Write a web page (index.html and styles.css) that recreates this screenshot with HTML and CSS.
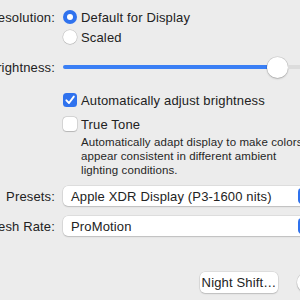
FILE: index.html
```html
<!DOCTYPE html>
<html>
<head>
<meta charset="utf-8">
<link rel="stylesheet" href="styles.css">
</head>
<body>
<div class="pane">
  <div class="row row-res">
    <div class="label"><span>Resolution:</span></div>
    <div class="radios">
      <div class="opt"><span class="radio on"></span><span>Default for Display</span></div>
      <div class="opt"><span class="radio"></span><span>Scaled</span></div>
    </div>
  </div>
  <div class="row row-bright">
    <div class="label"><span>Brightness:</span></div>
    <div class="slider">
      <div class="fill"></div>
      <div class="thumb"></div>
      <div class="rest"></div>
    </div>
  </div>
  <div class="row row-auto">
    <div class="label"></div>
    <div class="opt"><span class="check on"><svg width="14" height="14" viewBox="0 0 14 14"><path d="M3.4 7.3 L6 10 L10.8 3.6" fill="none" stroke="#fff" stroke-width="1.9" stroke-linecap="round" stroke-linejoin="round"/></svg></span><span>Automatically adjust brightness</span></div>
  </div>
  <div class="row row-tt">
    <div class="label"></div>
    <div class="opt"><span class="check"></span><span>True Tone</span></div>
  </div>
  <div class="row row-desc">
    <div class="label"></div>
    <p class="desc">Automatically adapt display to make colors<br>appear consistent in different ambient<br>lighting conditions.</p>
  </div>
  <div class="row row-presets">
    <div class="label"><span>Presets:</span></div>
    <div class="popup"><span class="ptext">Apple XDR Display (P3-1600 nits)</span><span class="arrow"></span></div>
  </div>
  <div class="row row-rate">
    <div class="label"><span>Refresh Rate:</span></div>
    <div class="popup"><span class="ptext">ProMotion</span><span class="arrow"></span></div>
  </div>
  <div class="buttons">
    <div class="btn">Night Shift…</div>
    <div class="help">?</div>
  </div>
</div>
</body>
</html>
```

FILE: styles.css
```css
html, body {
  margin: 0;
  padding: 0;
}
body {
  width: 300px;
  height: 300px;
  overflow: hidden;
  background: #ececec;
  font-family: "Liberation Sans", Arial, sans-serif;
  font-size: 13px;
  letter-spacing: 0.15px;
  color: #222;
}
.pane {
  padding-top: 7px;
  width: 300px;
}
.row {
  display: flex;
  align-items: center;
  gap: 8px;
}
.label {
  width: 55px;
  flex: 0 0 55px;
  display: flex;
  justify-content: flex-end;
  white-space: nowrap;
  align-self: flex-start;
  height: 20px;
  align-items: center;
}
.radios {
  display: flex;
  flex-direction: column;
}
.opt {
  height: 20px;
  display: flex;
  align-items: center;
  gap: 4px;
  white-space: nowrap;
}
.radio {
  width: 14px;
  height: 14px;
  border-radius: 50%;
  background: #fff;
  box-shadow: 0 0 0 0.5px rgba(0,0,0,0.18), 0 0.5px 1px rgba(0,0,0,0.15);
  box-sizing: border-box;
  display: flex;
  align-items: center;
  justify-content: center;
}
.radio.on {
  background: #2f72ee;
  box-shadow: none;
}
.radio.on::after {
  content: "";
  width: 6px;
  height: 6px;
  border-radius: 50%;
  background: #fff;
}
.row-bright {
  margin-top: 10px;
  height: 20px;
}
.slider {
  flex: 0 0 260px;
  height: 21px;
  display: flex;
  align-items: center;
}
.fill {
  width: 204px;
  height: 4px;
  background: #3a7ff5;
  border-radius: 2px 0 0 2px;
}
.thumb {
  width: 21px;
  height: 21px;
  border-radius: 50%;
  background: #fff;
  box-shadow: 0 0 0 0.5px rgba(0,0,0,0.15), 0 1px 2px rgba(0,0,0,0.2);
  flex: 0 0 21px;
}
.rest {
  flex: 1;
  height: 4px;
  background: #dcdcdc;
}
.row-auto {
  margin-top: 13px;
}
.row-tt {
  margin-top: 4px;
}
.check {
  width: 14px;
  height: 14px;
  border-radius: 3.5px;
  background: #fff;
  box-shadow: 0 0 0 0.5px rgba(0,0,0,0.18), 0 0.5px 1px rgba(0,0,0,0.15);
  display: block;
}
.check.on {
  background: #2f72ee;
  box-shadow: none;
}
.check svg {
  display: block;
}
.row-desc {
  margin-top: 1px;
}
.desc {
  margin: 0 0 0 18px;
  font-size: 11.5px;
  letter-spacing: 0.1px;
  line-height: 14px;
  white-space: nowrap;
  color: #262626;
}
.row-desc .label {
  height: auto;
}
.row-presets {
  margin-top: 9px;
}
.row-rate {
  margin-top: 10px;
}
.popup {
  flex: 0 0 253px;
  height: 20px;
  background: #fff;
  border-radius: 5px;
  box-shadow: 0 0 0 0.5px rgba(0,0,0,0.12), 0 1px 1.5px rgba(0,0,0,0.15);
  display: flex;
  align-items: center;
  justify-content: space-between;
  white-space: nowrap;
}
.ptext {
  padding-left: 8px;
}
.arrow {
  width: 16px;
  height: 16px;
  margin-right: 2px;
  border-radius: 4px;
  background: #2f72ee;
}
.buttons {
  margin-top: 36px;
  display: flex;
  gap: 19px;
  padding-left: 200px;
}
.btn {
  flex: 0 0 78px;
  height: 21px;
  background: #fff;
  border-radius: 5px;
  box-shadow: 0 0 0 0.5px rgba(0,0,0,0.12), 0 1px 1.5px rgba(0,0,0,0.15);
  display: flex;
  align-items: center;
  justify-content: center;
  white-space: nowrap;
}
.help {
  flex: 0 0 21px;
  height: 21px;
  border-radius: 50%;
  background: #fff;
  box-shadow: 0 0 0 0.5px rgba(0,0,0,0.12), 0 1px 1.5px rgba(0,0,0,0.15);
  display: flex;
  align-items: center;
  justify-content: center;
}
```
